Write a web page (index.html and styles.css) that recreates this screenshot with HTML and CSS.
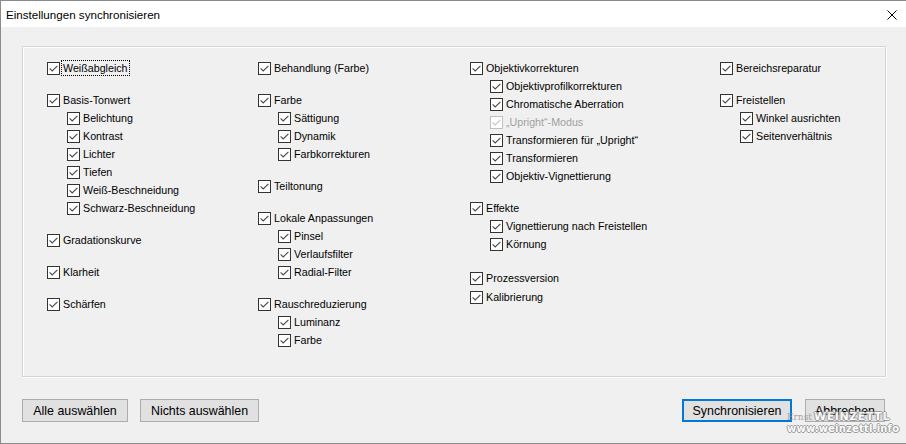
FILE: index.html
```html
<!DOCTYPE html>
<html lang="de">
<head>
<meta charset="utf-8">
<title>Einstellungen synchronisieren</title>
<link rel="stylesheet" href="styles.css">
</head>
<body>
<div class="window">
  <div class="titlebar">
    <span class="title">Einstellungen synchronisieren</span>
    <span class="close"><svg width="10" height="10" viewBox="0 0 10 10"><path d="M0.5 0.5 L9.5 9.5 M9.5 0.5 L0.5 9.5" stroke="#000" stroke-width="1" fill="none"/></svg></span>
  </div>
  <div class="content">
    <div class="panel">
      <div class="col c1">
        <div class="group">
          <div class="item"><span class="box on"></span><span class="lbl focus">Weißabgleich</span></div>
        </div>
        <div class="group">
          <div class="item"><span class="box on"></span><span class="lbl">Basis-Tonwert</span></div>
          <div class="item sub"><span class="box on"></span><span class="lbl">Belichtung</span></div>
          <div class="item sub"><span class="box on"></span><span class="lbl">Kontrast</span></div>
          <div class="item sub"><span class="box on"></span><span class="lbl">Lichter</span></div>
          <div class="item sub"><span class="box on"></span><span class="lbl">Tiefen</span></div>
          <div class="item sub"><span class="box on"></span><span class="lbl">Weiß-Beschneidung</span></div>
          <div class="item sub"><span class="box on"></span><span class="lbl">Schwarz-Beschneidung</span></div>
        </div>
        <div class="group">
          <div class="item"><span class="box on"></span><span class="lbl">Gradationskurve</span></div>
        </div>
        <div class="group">
          <div class="item"><span class="box on"></span><span class="lbl">Klarheit</span></div>
        </div>
        <div class="group">
          <div class="item"><span class="box on"></span><span class="lbl">Schärfen</span></div>
        </div>
      </div>
      <div class="col c2">
        <div class="group">
          <div class="item"><span class="box on"></span><span class="lbl">Behandlung (Farbe)</span></div>
        </div>
        <div class="group">
          <div class="item"><span class="box on"></span><span class="lbl">Farbe</span></div>
          <div class="item sub"><span class="box on"></span><span class="lbl">Sättigung</span></div>
          <div class="item sub"><span class="box on"></span><span class="lbl">Dynamik</span></div>
          <div class="item sub"><span class="box on"></span><span class="lbl">Farbkorrekturen</span></div>
        </div>
        <div class="group">
          <div class="item"><span class="box on"></span><span class="lbl">Teiltonung</span></div>
        </div>
        <div class="group">
          <div class="item"><span class="box on"></span><span class="lbl">Lokale Anpassungen</span></div>
          <div class="item sub"><span class="box on"></span><span class="lbl">Pinsel</span></div>
          <div class="item sub"><span class="box on"></span><span class="lbl">Verlaufsfilter</span></div>
          <div class="item sub"><span class="box on"></span><span class="lbl">Radial-Filter</span></div>
        </div>
        <div class="group">
          <div class="item"><span class="box on"></span><span class="lbl">Rauschreduzierung</span></div>
          <div class="item sub"><span class="box on"></span><span class="lbl">Luminanz</span></div>
          <div class="item sub"><span class="box on"></span><span class="lbl">Farbe</span></div>
        </div>
      </div>
      <div class="col c3">
        <div class="group">
          <div class="item"><span class="box on"></span><span class="lbl">Objektivkorrekturen</span></div>
          <div class="item sub"><span class="box on"></span><span class="lbl">Objektivprofilkorrekturen</span></div>
          <div class="item sub"><span class="box on"></span><span class="lbl">Chromatische Aberration</span></div>
          <div class="item sub disabled"><span class="box on"></span><span class="lbl">„Upright“-Modus</span></div>
          <div class="item sub"><span class="box on"></span><span class="lbl">Transformieren für „Upright“</span></div>
          <div class="item sub"><span class="box on"></span><span class="lbl">Transformieren</span></div>
          <div class="item sub"><span class="box on"></span><span class="lbl">Objektiv-Vignettierung</span></div>
        </div>
        <div class="group">
          <div class="item"><span class="box on"></span><span class="lbl">Effekte</span></div>
          <div class="item sub"><span class="box on"></span><span class="lbl">Vignettierung nach Freistellen</span></div>
          <div class="item sub"><span class="box on"></span><span class="lbl">Körnung</span></div>
        </div>
        <div class="group wide">
          <div class="item"><span class="box on"></span><span class="lbl">Prozessversion</span></div>
        </div>
        <div class="group tight">
          <div class="item"><span class="box on"></span><span class="lbl">Kalibrierung</span></div>
        </div>
      </div>
      <div class="col c4">
        <div class="group">
          <div class="item"><span class="box on"></span><span class="lbl">Bereichsreparatur</span></div>
        </div>
        <div class="group">
          <div class="item"><span class="box on"></span><span class="lbl">Freistellen</span></div>
          <div class="item sub"><span class="box on"></span><span class="lbl">Winkel ausrichten</span></div>
          <div class="item sub"><span class="box on"></span><span class="lbl">Seitenverhältnis</span></div>
        </div>
      </div>
    </div>
    <div class="footer">
      <div class="btns">
        <button class="btn b-all">Alle auswählen</button>
        <button class="btn b-none">Nichts auswählen</button>
      </div>
      <div class="btns">
        <button class="btn default b-sync">Synchronisieren</button>
        <button class="btn b-cancel">Abbrechen</button>
      </div>
    </div>
  </div>
  <div class="watermark">
    <div class="wm1"><span class="wm-ernst">Ernst</span><span class="wm-name">WEINZETTL</span></div>
    <div class="wm2">www.weinzettl.info</div>
  </div>
</div>
</body>
</html>
```
FILE: styles.css
```css
* { box-sizing: border-box; }
html, body {
  margin: 0;
  padding: 0;
  background: #f0f0f0;
}
body {
  width: 906px;
  height: 444px;
  overflow: hidden;
  font-family: "Liberation Sans", Arial, sans-serif;
  color: #000;
}
.window {
  position: relative;
  width: 906px;
  height: 444px;
  border-top: 1px solid #8a8a8a;
  border-left: 1px solid #8a8a8a;
  border-bottom: 1px solid #8a8a8a;
  background: #f0f0f0;
  display: flex;
  flex-direction: column;
}
.titlebar {
  height: 26px;
  background: #fff;
  display: flex;
  align-items: center;
  justify-content: space-between;
  padding: 0 9px 0 5px;
}
.title {
  font-size: 11.6px;
  line-height: 14px;
  padding-top: 1px;
}
.close {
  display: flex;
  width: 10px;
  height: 10px;
  margin-top: 1px;
}
.content {
  flex: 1;
  padding: 19px 20px 0 21px;
  display: flex;
  flex-direction: column;
}
.panel {
  height: 331px;
  border: 1px solid #d5d5d5;
  box-shadow: inset 1px 1px 0 #fff, 1px 1px 0 #fff;
  padding: 12px 0 0 24px;
  display: grid;
  grid-template-columns: 211px 212px 250px 1fr;
  align-items: start;
}
.group + .group { margin-top: 14px; }
.group.wide { margin-top: 16px; }
.group.tight { margin-top: 1px; }
.item {
  height: 18px;
  display: flex;
  align-items: center;
  font-size: 10.7px;
  white-space: nowrap;
}
.item.sub { padding-left: 20px; }
.box {
  width: 13px;
  height: 13px;
  flex: none;
  border: 1px solid #333;
  background: #fff;
  position: relative;
}
.box.on::after {
  content: "";
  position: absolute;
  left: 1px;
  top: 1px;
  width: 9px;
  height: 9px;
  background: no-repeat center / 9px 9px url("data:image/svg+xml;utf8,<svg xmlns='http://www.w3.org/2000/svg' width='9' height='9' viewBox='0 0 9 9'><path d='M0.6 4.4 L3.2 7 L8.4 1.8' stroke='%23484848' stroke-width='1.1' fill='none'/></svg>");
}
.lbl {
  margin-left: 1px;
  padding: 0 1px;
  border: 1px dotted transparent;
  line-height: 14px;
}
.lbl.focus { border-color: #000; }
.disabled .box { border-color: #c0c0c0; }
.disabled .box.on::after {
  background-image: url("data:image/svg+xml;utf8,<svg xmlns='http://www.w3.org/2000/svg' width='9' height='9' viewBox='0 0 9 9'><path d='M0.6 4.4 L3.2 7 L8.4 1.8' stroke='%23c4c4c4' stroke-width='1.1' fill='none'/></svg>");
}
.disabled .lbl { color: #a0a0a0; }
.footer {
  margin-top: 22px;
  display: flex;
  justify-content: space-between;
  padding-right: 1px;
}
.btns {
  display: flex;
  gap: 12px;
}
.btn {
  height: 23px;
  border: 1px solid #adadad;
  background: #e1e1e1;
  font-family: "Liberation Sans", Arial, sans-serif;
  font-size: 12.4px;
  color: #000;
  padding: 0;
  margin: 0;
}
.b-all { width: 106px; }
.b-none { width: 119px; }
.b-sync { width: 110px; }
.b-cancel { width: 80px; margin-left: 1px; }
.btn.default {
  border: 2px solid #0078d7;
}
.watermark {
  position: absolute;
  left: 786px;
  top: 410px;
  width: 112px;
  font-family: "DejaVu Sans", sans-serif;
  font-weight: bold;
  color: #fff;
  text-shadow: 1px 0 0 #8c8c8c, -1px 0 0 #8c8c8c, 0 1px 0 #8c8c8c, 0 -1px 0 #8c8c8c;
  opacity: 0.85;
  line-height: 11px;
}
.wm1 { display: flex; align-items: baseline; }
.wm-ernst {
  font-family: "DejaVu Serif", serif;
  font-weight: normal;
  font-size: 9px;
  color: #9a9a9a;
  text-shadow: none;
  margin-right: 2px;
}
.wm-name { font-size: 11px; letter-spacing: 0.6px; }
.wm2 { font-size: 10px; letter-spacing: 0.2px; }
```
